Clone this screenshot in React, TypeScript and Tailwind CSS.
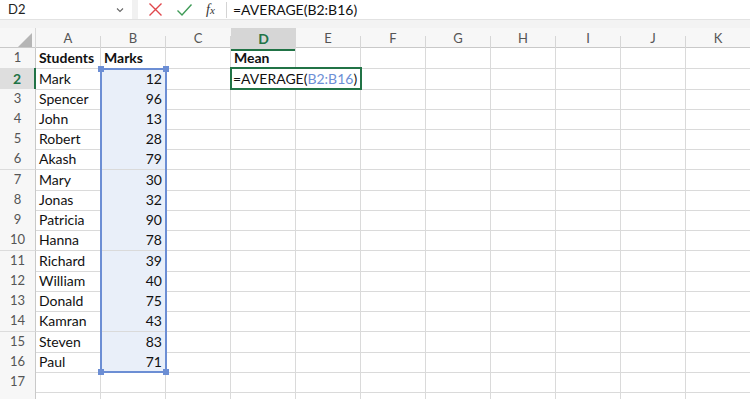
import React from "react";

const cols = ["A", "B", "C", "D", "E", "F", "G", "H", "I", "J", "K"];

const students: [string, number][] = [
  ["Mark", 12],
  ["Spencer", 96],
  ["John", 13],
  ["Robert", 28],
  ["Akash", 79],
  ["Mary", 30],
  ["Jonas", 32],
  ["Patricia", 90],
  ["Hanna", 78],
  ["Richard", 39],
  ["William", 40],
  ["Donald", 75],
  ["Kamran", 43],
  ["Steven", 83],
  ["Paul", 71],
];

// rows 2, 6, 10, 14 are a pixel taller (screenshot was scaled)
const rowH = (r: number) => (r % 4 === 2 ? "h-[21px]" : "h-[20px]");

function Cell({ r, c }: { r: number; c: number }) {
  let content: React.ReactNode = null;
  let cls = "";
  if (r === 1) {
    if (c === 0) content = "Students";
    if (c === 1) content = "Marks";
    if (c === 3) content = "Mean";
    cls = "font-bold";
  } else if (r >= 2 && r <= 16) {
    const s = students[r - 2];
    if (c === 0) content = s[0];
    if (c === 1) {
      content = s[1];
      cls = "justify-end bg-[#e9eff9]";
    }
  }
  return (
    <div
      className={`flex items-center border-r border-b border-[#dadada] px-[3px] text-[14px] leading-none text-[#111] ${cls}`}
    >
      {content}
    </div>
  );
}

export default function App() {
  return (
    <div
      className="w-[750px] h-[399px] overflow-hidden bg-white"
      style={{ fontFamily: "Lato, 'Open Sans', sans-serif" }}
    >
      {/* Formula bar */}
      <div className="flex h-[20px] items-center bg-white border-b border-[#e2e2e2]">
        <div className="flex w-[132px] items-center justify-between pl-[8px] pr-[8px] text-[13px] text-[#222]">
          <span>D2</span>
          <svg width="8" height="6" viewBox="0 0 8 6">
            <path d="M1 1.5 L4 4.5 L7 1.5" stroke="#666" strokeWidth="1.1" fill="none" />
          </svg>
        </div>
        <div className="h-full w-[6px] bg-[#f1f1f1]" />
        <div className="flex h-full w-[88px] items-center gap-[13px] pl-[10px]">
          <svg width="15" height="15" viewBox="0 0 15 15">
            <path d="M1.5 1.5 L13.5 13.5 M13.5 1.5 L1.5 13.5" stroke="#e0474c" strokeWidth="1.4" />
          </svg>
          <svg width="17" height="14" viewBox="0 0 17 14">
            <path d="M1.5 7.5 L6 12 L15.5 1.5" stroke="#3f9b57" strokeWidth="1.4" fill="none" />
          </svg>
          <span
            className="text-[14px] italic text-[#333]"
            style={{ fontFamily: "'Liberation Serif', serif" }}
          >
            f<span className="text-[11px]">x</span>
          </span>
        </div>
        <div className="h-[16px] w-px bg-[#d4d4d4]" />
        <div className="pl-[6px] text-[14px] text-[#111]">=AVERAGE(B2:B16)</div>
      </div>
      <div className="h-[8px] bg-[#f3f3f3]" />

      {/* Column headers */}
      <div className="grid h-[20px] grid-cols-[36px_repeat(11,65px)] bg-[#f7f7f7] border-b border-[#c9c9c9]">
        <div className="relative border-r border-[#d8d8d8]">
          <svg className="absolute right-[3px] bottom-[3px]" width="14" height="14" viewBox="0 0 14 14">
            <path d="M14 0 L14 14 L0 14 Z" fill="#b5b5b5" />
          </svg>
        </div>
        {cols.map((c) =>
          c === "D" ? (
            <div
              key={c}
              className="flex items-center justify-center bg-[#d6d6d6] border-b-2 border-[#217346] text-[14px] font-bold text-[#217346] -mb-px"
            >
              {c}
            </div>
          ) : (
            <div key={c} className="flex items-center justify-center text-[13px] text-[#555]">
              <span className="flex-1 text-center">{c}</span>
              <span className="h-[14px] w-px self-end bg-[#d6d6d6]" />
            </div>
          )
        )}
      </div>

      {/* Rows */}
      <div className="relative">
        {Array.from({ length: 18 }, (_, i) => i + 1).map((r) => (
          <div key={r} className={`grid grid-cols-[36px_repeat(11,65px)] ${rowH(r)}`}>
            {r === 2 ? (
              <div className="flex items-center justify-center bg-[#dedede] border-r-2 border-b border-r-[#217346] border-b-[#d0d0d0] text-[14px] font-bold text-[#217346]">
                {r}
              </div>
            ) : (
              <div className="flex items-center justify-center bg-[#f7f7f7] border-r border-b border-r-[#c9c9c9] border-b-[#dcdcdc] text-[13px] text-[#555]">
                {r < 18 ? r : null}
              </div>
            )}
            {cols.map((_, c) => (
              <Cell key={c} r={r} c={c} />
            ))}
          </div>
        ))}

        {/* Selection B2:B16 */}
        <div className="pointer-events-none absolute left-[100px] top-[20px] h-[305px] w-[67px] border-2 border-[#6c8ed4]">
          <div className="absolute -left-[4px] -top-[4px] h-[6px] w-[6px] bg-[#6c8ed4]" />
          <div className="absolute -right-[4px] -top-[4px] h-[6px] w-[6px] bg-[#6c8ed4]" />
          <div className="absolute -left-[4px] -bottom-[4px] h-[6px] w-[6px] bg-[#6c8ed4]" />
          <div className="absolute -right-[4px] -bottom-[4px] h-[6px] w-[6px] bg-[#6c8ed4]" />
        </div>

        {/* Active cell D2 in edit mode, box spans into E2 */}
        <div className="absolute left-[230px] top-[19px] flex h-[23px] w-[132px] items-center border-2 border-[#217346] bg-white pl-[1px] text-[14px] leading-none text-[#111] whitespace-nowrap">
          =AVERAGE(<span className="text-[#6d8fd6]">B2:B16</span>)
        </div>
      </div>
    </div>
  );
}
